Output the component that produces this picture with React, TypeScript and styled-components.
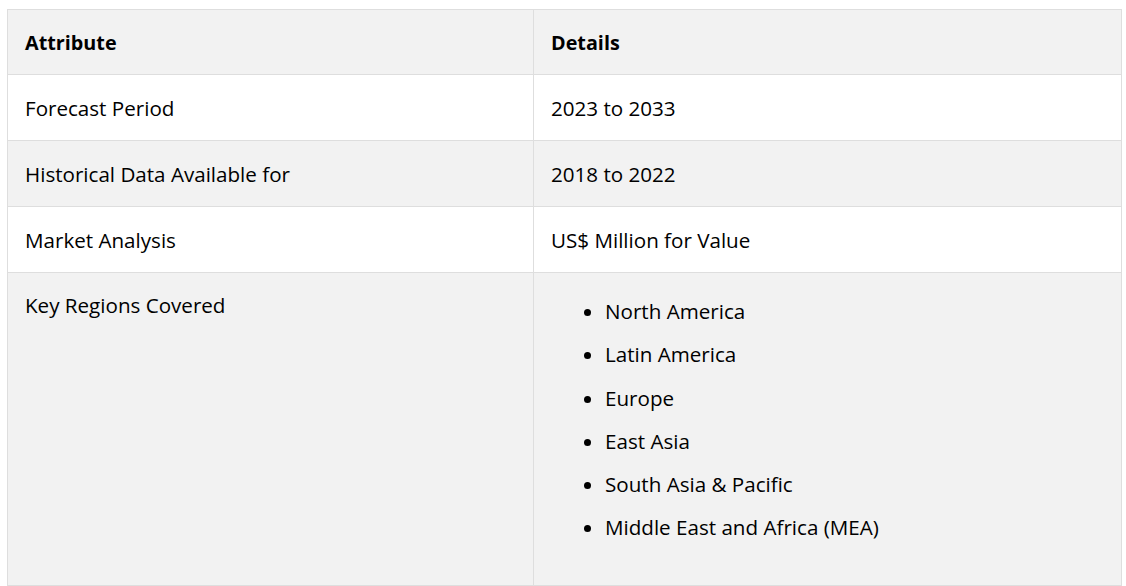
import React from "react";
import styled, { createGlobalStyle } from "styled-components";

const Global = createGlobalStyle`
  html, body { margin: 0; padding: 0; background: #ffffff; }
  body { font-family: "Open Sans", "Noto Sans", sans-serif; color: #000; }
`;

const Page = styled.div`
  padding: 9px 0 0 7px;
`;

const Table = styled.table`
  border-collapse: collapse;
  width: 1114px;
  table-layout: fixed;
  font-size: 20.6px;
  border: 1px solid #dedede;
`;

const Row = styled.tr<{ $shade?: boolean }>`
  background: ${(p) => (p.$shade ? "#f2f2f2" : "#ffffff")};
`;

const Head = styled.th`
  text-align: left;
  font-weight: 700;
  font-size: 19.8px;
  padding: 18px 17px 16px;
  line-height: 30px;
  height: 64px;
  box-sizing: border-box;
  border: 1px solid #dedede;
`;

const Cell = styled.td<{ $top?: boolean }>`
  padding: 17px 17px;
  line-height: 30px;
  height: 66px;
  box-sizing: border-box;
  vertical-align: ${(p) => (p.$top ? "top" : "middle")};
  border: 1px solid #dedede;
`;

const List = styled.ul`
  margin: 0 0 18px;
  padding: 0 0 0 54px;
`;

const Item = styled.li`
  line-height: 43.3px;
`;

const rows: [string, string][] = [
  ["Forecast Period", "2023 to 2033"],
  ["Historical Data Available for", "2018 to 2022"],
  ["Market Analysis", "US$ Million for Value"],
];

const regions = [
  "North America",
  "Latin America",
  "Europe",
  "East Asia",
  "South Asia & Pacific",
  "Middle East and Africa (MEA)",
];

export default function App() {
  return (
    <>
      <Global />
      <Page>
        <Table>
          <colgroup>
            <col style={{ width: 526 }} />
            <col style={{ width: 588 }} />
          </colgroup>
          <thead>
            <Row $shade>
              <Head>Attribute</Head>
              <Head>Details</Head>
            </Row>
          </thead>
          <tbody>
            {rows.map(([a, d], i) => (
              <Row key={a} $shade={i % 2 === 1}>
                <Cell>{a}</Cell>
                <Cell>{d}</Cell>
              </Row>
            ))}
            <Row $shade>
              <Cell $top>Key Regions Covered</Cell>
              <Cell $top>
                <List>
                  {regions.map((r) => (
                    <Item key={r}>{r}</Item>
                  ))}
                </List>
              </Cell>
            </Row>
          </tbody>
        </Table>
      </Page>
    </>
  );
}
